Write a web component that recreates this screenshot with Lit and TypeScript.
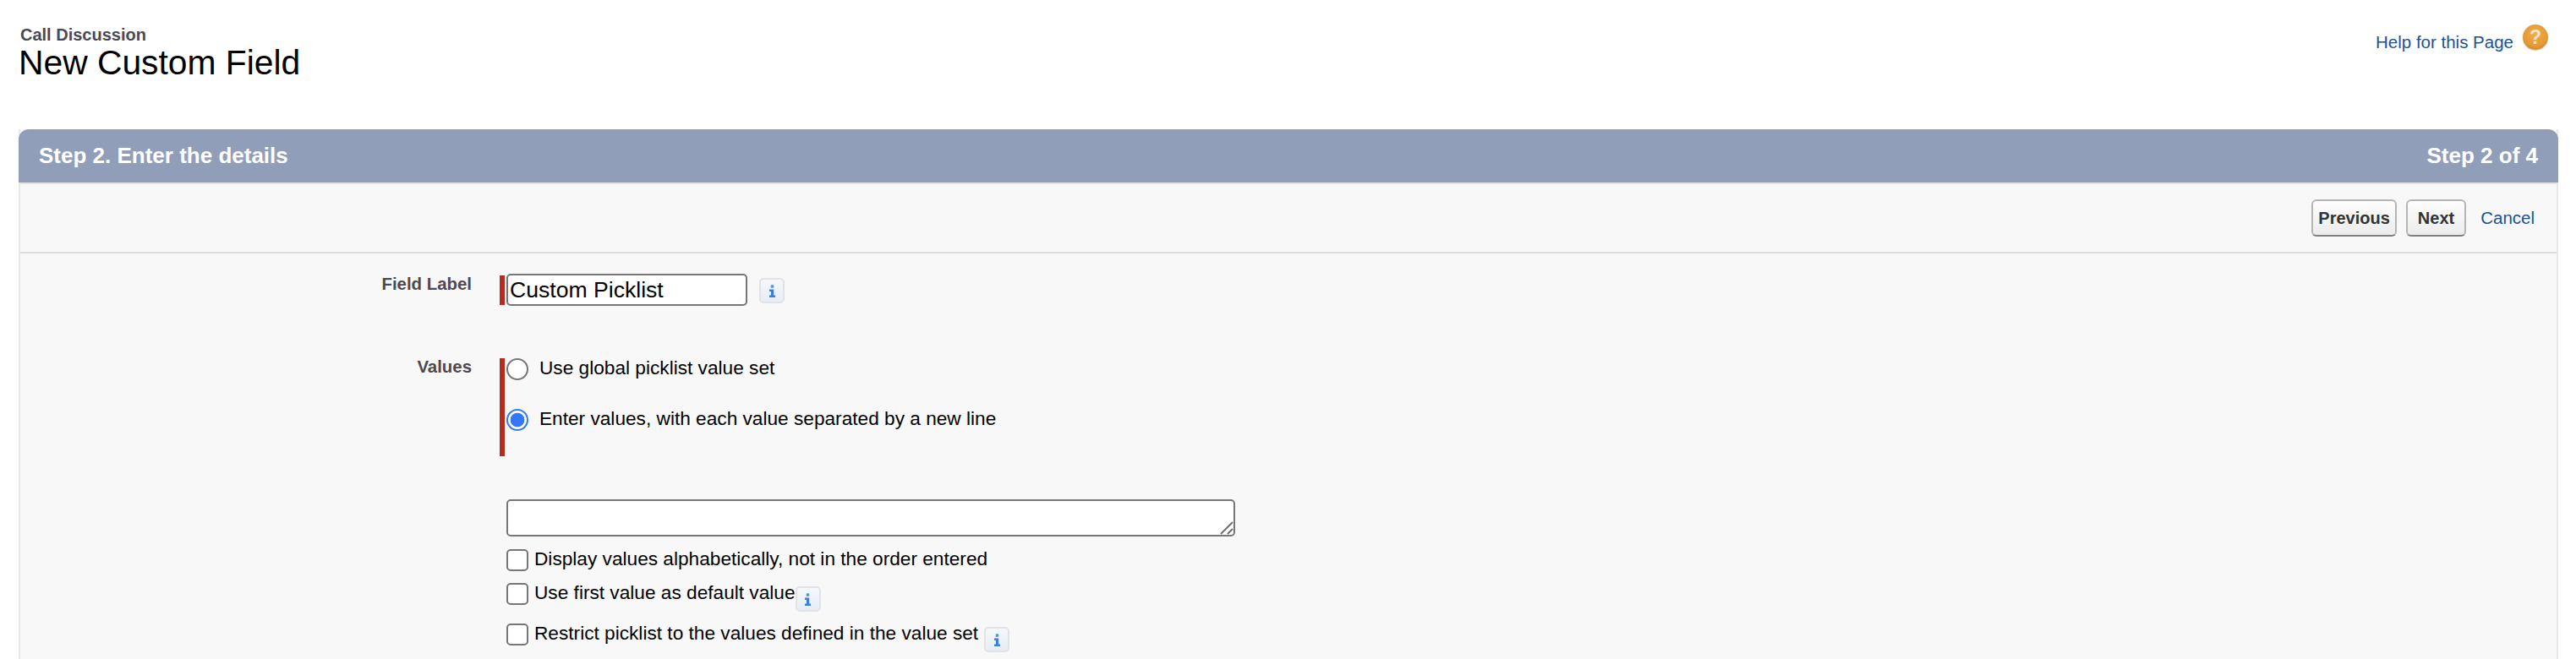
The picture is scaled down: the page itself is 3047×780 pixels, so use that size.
import { LitElement, html, css } from "lit";
import { customElement } from "lit/decorators.js";

const infoIcon = html`<span class="info"><svg width="9" height="15" viewBox="0 0 9 15">
  <circle cx="4.5" cy="2" r="2" fill="#5b93e0"></circle>
  <path d="M1 5.5h5.2v7H8V15H1v-2.5h2V8H1z" fill="#3f7fd6"></path>
</svg></span>`;

@customElement("app-root")
export class AppRoot extends LitElement {
  static styles = css`
    :host {
      display: block;
      height: 780px;
      overflow: hidden;
      background: #fff;
      font-family: "Liberation Sans", Arial, sans-serif;
      color: #000;
    }
    a {
      color: #1b5297;
      text-decoration: none;
    }
    .page-head {
      display: flex;
      justify-content: space-between;
      height: 153px;
      padding: 0 33px 0 22px;
      box-sizing: border-box;
    }
    .titles {
      padding-top: 30px;
    }
    .page-type {
      font-size: 20px;
      line-height: 22px;
      font-weight: bold;
      color: #4a4a56;
      padding-left: 2px;
    }
    .page-title {
      font-size: 40.8px;
      line-height: 44px;
      font-weight: normal;
      margin: 0;
    }
    .help {
      display: flex;
      align-items: flex-start;
      gap: 11px;
      padding-top: 29px;
      font-size: 20.5px;
    }
    .help-text {
      margin-top: 9px;
    }
    .help-icon {
      width: 30px;
      height: 30px;
      border-radius: 50%;
      background: radial-gradient(circle at 50% 38%, #f0ac4c 0%, #e59a34 60%, #b8701f 100%);
      box-shadow: 0 1px 1px #d9c4a4;
      color: #fbe9cf;
      font-size: 23px;
      font-weight: bold;
      line-height: 30px;
      text-align: center;
    }
    .panel {
      margin: 0 21px 0 22px;
      border-left: 2px solid #e8e8e8;
      border-right: 2px solid #e8e8e8;
      background: #f8f8f8;
      min-height: 640px;
    }
    .panel-head {
      display: flex;
      justify-content: space-between;
      align-items: center;
      height: 63px;
      margin: 0 -2px;
      padding: 0 24px;
      background: #919eba;
      border-radius: 12px 12px 0 0;
      color: #fff;
      font-size: 26px;
      font-weight: bold;
      border-bottom: 2px solid #e4e4e4;
    }
    .buttons {
      display: flex;
      justify-content: flex-end;
      align-items: center;
      height: 80px;
      padding-right: 26px;
      border-bottom: 2px solid #dcdcdc;
    }
    .btn {
      height: 44px;
      box-sizing: border-box;
      padding: 0 6px;
      margin-right: 11px;
      border: 2px solid #b5b5b5;
      border-bottom-color: #7f7f7f;
      border-radius: 6px;
      background: linear-gradient(#fdfdfd, #ececec);
      color: #333;
      font: bold 20px "Liberation Sans", Arial, sans-serif;
    }
    .btn.next {
      padding: 0 12px;
      margin-right: 17px;
    }
    .cancel {
      font-size: 20.5px;
    }
    .row {
      display: grid;
      grid-template-columns: 534px 1fr;
      align-items: start;
    }
    .row > label {
      text-align: right;
      font-size: 20.4px;
      font-weight: bold;
      color: #4a4a56;
    }
    .field-row {
      padding-top: 24px;
    }
    .field-row > label {
      padding-top: 1px;
    }
    .field {
      display: flex;
      align-items: center;
      margin-left: 33px;
    }
    .req {
      width: 6px;
      height: 35px;
      background: #b82a1c;
      margin-right: 2px;
    }
    input[type="text"] {
      width: 285px;
      height: 38px;
      box-sizing: border-box;
      border: 2px solid #767676;
      border-radius: 5px;
      background: #fff;
      padding: 0 2px;
      color: #000;
      font: 26.6px "Liberation Sans", Arial, sans-serif;
    }
    .info {
      display: inline-flex;
      align-items: center;
      justify-content: center;
      flex: none;
      width: 30px;
      height: 30px;
      box-sizing: border-box;
      border: 2px solid #e2e2e2;
      border-radius: 5px;
      background: linear-gradient(#f6f8fb, #e6edf6);
    }
    .field > .info {
      margin-left: 14px;
      margin-top: 2px;
    }
    .values-row {
      padding-top: 62px;
    }
    .values-row > label {
      margin-top: -1px;
    }
    .values {
      display: flex;
      margin-left: 33px;
    }
    .values .req {
      height: 116px;
    }
    .radios {
      display: flex;
      flex-direction: column;
      gap: 34px;
    }
    .radio {
      display: flex;
      align-items: flex-start;
      gap: 13px;
      font-size: 22.67px;
      line-height: 22px;
    }
    input[type="radio"] {
      appearance: none;
      width: 26px;
      height: 26px;
      margin: 0;
      box-sizing: border-box;
      border: 2px solid #767676;
      border-radius: 50%;
      background: #fff;
    }
    input[type="radio"]:checked {
      border-color: #3478f6;
      background: radial-gradient(circle, #3478f6 0 8px, #fff 8.7px);
    }
    .options {
      margin: 51px 0 0 41px;
      width: 862px;
    }
    .area {
      position: relative;
      height: 44px;
    }
    textarea {
      display: block;
      width: 100%;
      height: 100%;
      margin: 0;
      box-sizing: border-box;
      border: 2px solid #767676;
      border-radius: 5px;
      background: #fff;
      resize: none;
    }
    .grip {
      position: absolute;
      right: 0;
      bottom: 0;
    }
    .check {
      display: flex;
      align-items: flex-start;
      gap: 7px;
      font-size: 22.67px;
      line-height: 22px;
      white-space: nowrap;
      width: max-content;
    }
    .check.first {
      margin-top: 15px;
    }
    .check.second {
      margin-top: 14px;
    }
    .check.third {
      margin-top: 14px;
    }
    .check .info {
      margin: 4px 0 0 -7px;
    }
    .check.third .info {
      margin-left: 0;
    }
    input[type="checkbox"] {
      appearance: none;
      width: 26px;
      height: 26px;
      margin: 0;
      box-sizing: border-box;
      border: 2px solid #767676;
      border-radius: 5px;
      background: #fff;
    }
  `;

  render() {
    return html`
      <div class="page-head">
        <div class="titles">
          <div class="page-type">Call Discussion</div>
          <h1 class="page-title">New Custom Field</h1>
        </div>
        <a class="help" href="#"><span class="help-text">Help for this Page</span><span class="help-icon">?</span></a>
      </div>
      <div class="panel">
        <div class="panel-head">
          <span>Step 2. Enter the details</span>
          <span>Step 2 of 4</span>
        </div>
        <div class="buttons">
          <button class="btn">Previous</button>
          <button class="btn next">Next</button>
          <a class="cancel" href="#">Cancel</a>
        </div>
        <div class="row field-row">
          <label>Field Label</label>
          <div class="field">
            <span class="req"></span>
            <input type="text" .value=${"Custom Picklist"} />
            ${infoIcon}
          </div>
        </div>
        <div class="row values-row">
          <label>Values</label>
          <div>
            <div class="values">
              <span class="req"></span>
              <div class="radios">
                <label class="radio"><input type="radio" name="vals" />Use global picklist value set</label>
                <label class="radio"><input type="radio" name="vals" checked />Enter values, with each value separated by a new line</label>
              </div>
            </div>
            <div class="options">
              <div class="area">
                <textarea></textarea>
                <svg class="grip" width="20" height="20" viewBox="0 0 20 20">
                  <path d="M3 17L17 3M11 17l6-6" stroke="#6f6f6f" stroke-width="2" fill="none"></path>
                </svg>
              </div>
              <label class="check first"><input type="checkbox" />Display values alphabetically, not in the order entered</label>
              <label class="check second"><input type="checkbox" />Use first value as default value${infoIcon}</label>
              <label class="check third"><input type="checkbox" />Restrict picklist to the values defined in the value set${infoIcon}</label>
            </div>
          </div>
        </div>
      </div>
    `;
  }
}
